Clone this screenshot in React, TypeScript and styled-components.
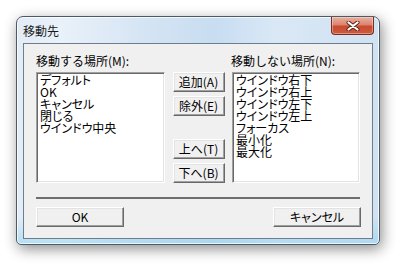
import styled, { createGlobalStyle } from 'styled-components';

const GlobalStyle = createGlobalStyle`
  html, body {
    margin: 0;
    padding: 0;
    background: #fff;
  }
  body {
    width: 399px;
    height: 268px;
    overflow: hidden;
    font-family: "Noto Sans CJK JP", "Noto Sans", sans-serif;
  }
`;

const Window = styled.div`
  box-sizing: border-box;
  margin: 16px 0 0 16px;
  width: 364px;
  height: 229px;
  display: flex;
  flex-direction: column;
  border: 1px solid #4d5966;
  border-radius: 7px 7px 5px 5px;
  background:
    linear-gradient(to bottom, rgba(255, 255, 255, 0) 88%, rgba(140, 210, 240, 0.55) 100%),
    linear-gradient(to right, #e2ecf7 0%, #e9f1f9 12%, #d3e3f3 38%, #c8ddf1 55%, #dae8f6 72%, #d0e1f2 100%);
  box-shadow:
    inset 0 0 0 1px rgba(255, 255, 255, 0.75),
    2px 4px 14px rgba(0, 0, 0, 0.45);
`;

const TitleBar = styled.div`
  height: 26px;
  display: flex;
  justify-content: space-between;
  align-items: flex-start;
  padding: 0 5px 0 6px;
`;

const Title = styled.div`
  margin-top: 7px;
  font-size: 12px;
  line-height: 14px;
  color: #1a1a1a;
`;

const CloseButton = styled.div`
  box-sizing: border-box;
  width: 43px;
  height: 18px;
  display: flex;
  align-items: center;
  justify-content: center;
  border: 1px solid #7a2c1f;
  border-top: none;
  border-radius: 0 0 4px 4px;
  background: linear-gradient(to bottom, #eab0a0 0%, #dc8470 45%, #c84a30 55%, #cf5a3c 100%);
  box-shadow: inset 0 0 0 1px rgba(255, 255, 255, 0.35);
`;

const Client = styled.div`
  box-sizing: border-box;
  height: 196px;
  margin: 0 6px 5px 6px;
  border: 1px solid #6f7d8b;
  background: #f0f0f0;
  padding: 10px 11px 11px 12px;
  display: flex;
  flex-direction: column;
`;

const Lists = styled.div`
  width: 324px;
  display: grid;
  grid-template-columns: 129px 52px 128px;
  grid-template-rows: 18px 111px;
  justify-content: space-between;
`;

const Label = styled.div<{ $shift?: number }>`
  font-size: 12px;
  line-height: 14px;
  color: #000;
  white-space: nowrap;
  margin-left: ${p => p.$shift ?? 0}px;
`;

const ListBox = styled.div`
  box-sizing: border-box;
  background: #fff;
  border: 1px solid;
  border-color: #a0a0a0 #fff #fff #a0a0a0;
  box-shadow: inset 1px 1px 0 #696969, inset -1px -1px 0 #e3e3e3;
  padding: 1px 3px;
  display: flex;
  flex-direction: column;
`;

const Item = styled.div`
  font-size: 12px;
  line-height: 12px;
  color: #000;
  white-space: nowrap;
  font-feature-settings: "palt";
`;

const ButtonColumn = styled.div`
  display: flex;
  flex-direction: column;
  justify-content: space-between;
`;

const ButtonGroup = styled.div`
  display: flex;
  flex-direction: column;
  gap: 4px;
`;

const Button = styled.div<{ $width: number }>`
  box-sizing: border-box;
  width: ${p => p.$width}px;
  height: 20px;
  display: flex;
  align-items: center;
  justify-content: center;
  background: #f0f0f0;
  border: 1px solid;
  border-color: #fff #696969 #696969 #fff;
  box-shadow: inset -1px -1px 0 #a0a0a0, inset 1px 1px 0 #e3e3e3;
  font-size: 12px;
  line-height: 12px;
  color: #000;
  font-feature-settings: "palt";
`;

const Separator = styled.div`
  width: 324px;
  height: 2px;
  margin: 14px 0 8px;
  background: #6e6e6e;
`;

const Footer = styled.div`
  display: flex;
  justify-content: space-between;
`;

const CloseGlyph = () => (
  <svg width="14" height="10" viewBox="0 0 14 10">
    <path d="M2.5 1.5 L11.5 8.5 M11.5 1.5 L2.5 8.5" stroke="#5a2418" strokeWidth="4" strokeLinecap="round" />
    <path d="M2.5 1.5 L11.5 8.5 M11.5 1.5 L2.5 8.5" stroke="#fff" strokeWidth="2.2" strokeLinecap="round" />
  </svg>
);

const moveItems = ['デフォルト', 'OK', 'キャンセル', '閉じる', 'ウインドウ中央'];
const stayItems = ['ウインドウ右下', 'ウインドウ右上', 'ウインドウ左下', 'ウインドウ左上', 'フォーカス', '最小化', '最大化'];

export default function App() {
  return (
    <>
      <GlobalStyle />
      <Window>
        <TitleBar>
          <Title>移動先</Title>
          <CloseButton>
            <CloseGlyph />
          </CloseButton>
        </TitleBar>
        <Client>
          <Lists>
            <Label>移動する場所(M):</Label>
            <div />
            <Label $shift={-1}>移動しない場所(N):</Label>
            <ListBox>
              {moveItems.map(item => (
                <Item key={item}>{item}</Item>
              ))}
            </ListBox>
            <ButtonColumn>
              <ButtonGroup>
                <Button $width={52}>追加(A)</Button>
                <Button $width={52}>除外(E)</Button>
              </ButtonGroup>
              <ButtonGroup>
                <Button $width={52}>上へ(T)</Button>
                <Button $width={52}>下へ(B)</Button>
              </ButtonGroup>
            </ButtonColumn>
            <ListBox>
              {stayItems.map(item => (
                <Item key={item}>{item}</Item>
              ))}
            </ListBox>
          </Lists>
          <Separator />
          <Footer>
            <Button $width={88}>OK</Button>
            <Button $width={88}>キャンセル</Button>
          </Footer>
        </Client>
      </Window>
    </>
  );
}
